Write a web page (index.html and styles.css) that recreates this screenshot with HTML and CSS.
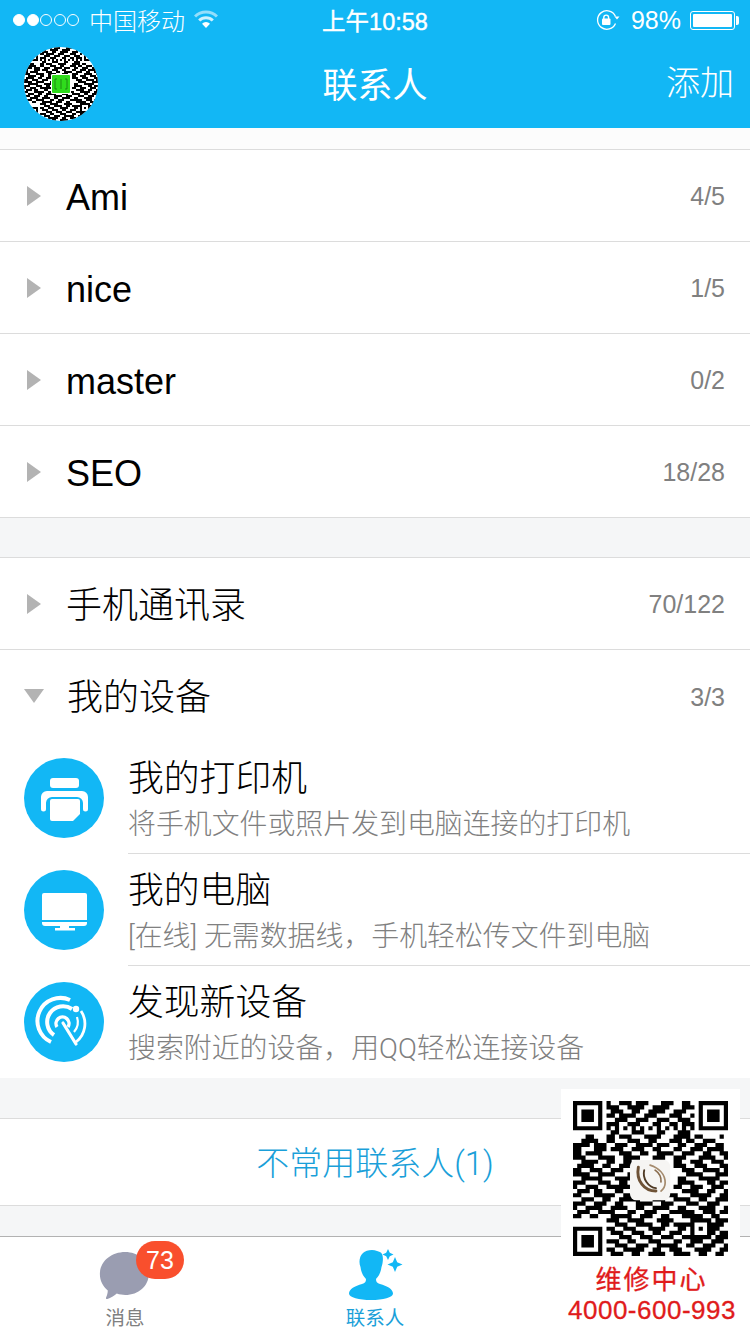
FILE: index.html
```html
<!DOCTYPE html>
<html lang="zh">
<head>
    <meta charset="utf-8">
    <title>联系人</title>
    <link rel="stylesheet" href="styles.css">
</head>
<body>
<div class="phone">
  <header class="top">
    <div class="status">
      <div class="status-left">
        <span class="signal"><i class="on"></i><i class="on"></i><i></i><i></i><i></i></span>
        <span class="carrier">中国移动</span>
        <svg class="wifi" width="24" height="18" viewBox="0 0 24 18" fill="none" stroke="#fff" stroke-width="3">
          <path d="M1 6.5a15.500 15.500 0 0 1 22 0" opacity=".55"/>
          <path d="M5.200 10.500a9.500 9.500 0 0 1 13.600 0" opacity=".8"/>
          <path d="M12 18l-4-4.300a5.600 5.600 0 0 1 8 0z" fill="#fff" stroke="none"/>
        </svg>
      </div>
      <div class="clock">上午10:58</div>
      <div class="status-right">
        <svg class="lock" width="24" height="20" viewBox="0 0 24 20" fill="none" stroke="#fff">
          <path d="M19.500 13.500a9.300 9.300 0 1 1 0-7" stroke-width="1.300"/>
          <path d="M18.500 6.500h5l-2.500 3z" fill="#fff" stroke="none"/>
          <rect x="6" y="8.500" width="8.500" height="6.500" rx="1" fill="#fff" stroke="none"/>
          <path d="M7.800 9V7.500a2.400 2.400 0 0 1 4.800 0V9" stroke-width="1.400"/>
        </svg>
        <span class="percent">98%</span>
        <span class="battery"><b></b></span>
      </div>
    </div>
    <nav class="nav">
      <svg class="avatar" viewBox="0 0 37 37">
        <defs><clipPath id="round"><circle cx="18.500" cy="18.500" r="18.500"/></clipPath></defs>
        <g clip-path="url(#round)">
          <rect width="37" height="37" fill="#fff"/>
          <path class="qr-modules" fill="#000"/>
          <rect x="13.500" y="13.500" width="10" height="10" rx=".6" fill="#fff"/>
          <rect x="14" y="14" width="9" height="9" rx=".5" fill="#2fdb1c"/>
          <path d="M16.500 16h-1v5h1M18.500 16v5M20.500 16h1v5h-1" fill="none" stroke="#176a10" stroke-width=".35"/>
        </g>
      </svg>
      <div class="nav-title">联系人</div>
      <div class="nav-add">添加</div>
    </nav>
  </header>

  <main class="content">
    <ul class="groups first">
      <li class="group"><i class="arrow"></i><span class="name">Ami</span><span class="count">4/5</span></li>
      <li class="group"><i class="arrow"></i><span class="name">nice</span><span class="count">1/5</span></li>
      <li class="group"><i class="arrow"></i><span class="name">master</span><span class="count">0/2</span></li>
      <li class="group"><i class="arrow"></i><span class="name">SEO</span><span class="count">18/28</span></li>
    </ul>

    <ul class="groups second">
      <li class="group"><i class="arrow"></i><span class="name">手机通讯录</span><span class="count">70/122</span></li>
      <li class="group open"><i class="arrow down"></i><span class="name">我的设备</span><span class="count">3/3</span></li>
      <li class="device">
        <svg class="device-icon" viewBox="0 0 80 80">
          <circle cx="40" cy="40" r="40" fill="#12b7f5"/>
          <rect x="26" y="20" width="29" height="10" rx="3" fill="#fff"/>
          <path d="M23 33h35a6 6 0 0 1 6 6v12a2.500 2.500 0 0 1-5 0V45a6 6 0 0 0-6-6H28a6 6 0 0 0-6 6v6a2.500 2.500 0 0 1-5 0V39a6 6 0 0 1 6-6z" fill="#fff"/>
          <path d="M28 41h26a2 2 0 0 1 2 2v13l-7 7H28a2 2 0 0 1-2-2V43a2 2 0 0 1 2-2z" fill="#fff"/>
        </svg>
        <div class="device-text">
          <div class="device-name">我的打印机</div>
          <div class="device-desc">将手机文件或照片发到电脑连接的打印机</div>
        </div>
      </li>
      <li class="device">
        <svg class="device-icon" viewBox="0 0 80 80">
          <circle cx="40" cy="40" r="40" fill="#12b7f5"/>
          <path d="M20 23h41a2 2 0 0 1 2 2v25H18V25a2 2 0 0 1 2-2z" fill="#fff"/>
          <path d="M18 52h45v1a3 3 0 0 1-3 3H21a3 3 0 0 1-3-3z" fill="#fff"/>
          <path d="M36 56h9v2h6v2.500H31V58h5z" fill="#fff"/>
        </svg>
        <div class="device-text">
          <div class="device-name">我的电脑</div>
          <div class="device-desc">[在线] 无需数据线，手机轻松传文件到电脑</div>
        </div>
      </li>
      <li class="device last">
        <svg class="device-icon" viewBox="0 0 80 80">
          <circle cx="40" cy="40" r="40" fill="#12b7f5"/>
          <g fill="none" stroke="#fff">
            <path d="M27 60A23 23 0 0 1 46 18" stroke-width="4"/>
            <path d="M57 29a23 23 0 0 1-5 31" stroke-width="2.800"/>
            <path d="M30 53A15.500 15.500 0 0 1 48 27" stroke-width="4"/>
            <path d="M53 35a15.500 15.500 0 0 1-3 15" stroke-width="2.200"/>
            <path d="M33 45a6.500 6.500 0 1 1 11 0" stroke-width="3.400"/>
          </g>
          <path d="M37 43l-10 22h22z" fill="#12b7f5"/>
          <path d="M39 41l13 21" fill="none" stroke="#fff" stroke-width="3.200" stroke-linecap="round"/>
          <circle cx="52" cy="27" r="3.200" fill="#fff"/>
        </svg>
        <div class="device-text">
          <div class="device-name">发现新设备</div>
          <div class="device-desc">搜索附近的设备，用QQ轻松连接设备</div>
        </div>
      </li>
    </ul>

    <div class="rare">不常用联系人(1)</div>
  </main>

  <footer class="tabs">
    <div class="tab">
      <span class="tab-icon">
        <svg width="60" height="56" viewBox="0 0 60 56">
          <path transform="translate(3.940 0) scale(.94 1)" d="M28 5c14 0 25 9.500 25 22 0 12-11 21-25 21-3 0-6-.4-9-1.400-3 2.400-6.500 4.400-10 5.400-1.400.3-1.800-.6-1.300-1.700 1-2 1.700-4.200 1.700-6.700C4 39 1 33.500 1 27 1 14.500 13 5 28 5z" fill="#9a9db1"/>
        </svg>
        <span class="badge">73</span>
      </span>
      <span class="tab-label">消息</span>
    </div>
    <div class="tab active">
      <span class="tab-icon">
        <svg width="60" height="56" viewBox="0 0 60 56">
          <path d="M18 6c3-3 10-4 14-2 2 .5 4 1 5 3 1.500 3 1 9-.5 13-.6 5-2.500 9-5.500 12 0 3 1 4 4 5 7 2 13 5 13 9.500 0 4-10 6.500-22 6.500S4 50.500 4 46.500C4 42 10 39 17 37c3-1 4-2 4-5-3-3-5-7-5.500-12-2-5-1-11 2.500-14z" fill="#12b7f5"/>
          <path d="M43 2l1.800 3.700L48.500 7.500l-3.700 1.800L43 13l-1.800-3.700-3.700-1.800 3.700-1.800zM50 10l2.200 5.300 5.300 2.200-5.300 2.200L50 25l-2.200-5.300-5.300-2.200 5.300-2.200z" fill="#12b7f5"/>
        </svg>
      </span>
      <span class="tab-label">联系人</span>
    </div>
    <div class="tab"></div>
  </footer>

  <aside class="promo">
    <svg class="promo-qr" viewBox="0 0 37 37">
      <path class="qr-modules" fill="#000"/>
      <rect x="13.600" y="14.100" width="9.600" height="9.600" rx="1.500" fill="#f6f5f3"/>
      <g fill="none" stroke-linecap="round">
        <path d="M15.600 15.800C15 19 17 21.500 19.800 21.500" stroke="#6e5236" stroke-width=".7"/>
        <path d="M17 16.500c-.5 2 1 4.100 2.800 4.300" stroke="#4f3a25" stroke-width=".45"/>
        <path d="M18.400 15.300c2.100.7 3.600 2.200 3.600 4.200 0 .9-.4 1.500-1 2" stroke="#a48a6c" stroke-width=".4"/>
        <path d="M19.600 16.500c1 .7 1.500 1.700 1.400 2.800" stroke="#8a6d4e" stroke-width=".4"/>
      </g>
    </svg>
    <div class="promo-title">维修中心</div>
    <div class="promo-phone">4000-600-993</div>
  </aside>
</div>
<script src="qr.js"></script>
</body>
</html>
```

FILE: styles.css
```css
* {
    box-sizing: border-box;
}

body {
    margin: 0;
    font-family: "Liberation Sans", "Noto Sans CJK SC", sans-serif;
    color: #000;
}

ul {
    list-style: none;
    margin: 0;
    padding: 0;
}

.phone {
    position: relative;
    width: 750px;
    height: 1334px;
    display: flex;
    flex-direction: column;
    overflow: hidden;
    background-color: #f5f6f7;
}

/* blue header */
.top {
    height: 128px;
    background-color: #12b7f5;
    color: #fff;
}

.status {
    height: 40px;
    display: grid;
    grid-template-columns: 1fr auto 1fr;
    align-items: center;
}

.status-left {
    display: flex;
    align-items: center;
    padding-left: 13px;
}

.signal {
    display: flex;
    gap: 1.500px;
}

.signal i {
    width: 12px;
    height: 12px;
    border-radius: 50%;
    border: 1px solid #fff;
}

.signal i.on {
    background-color: #fff;
}

.carrier {
    margin: -2px 0 0 10px;
    font-size: 24px;
    font-weight: 300;
}

.wifi {
    margin: -2px 0 0 9px;
}

.clock {
    margin-top: -1px;
    font-size: 23.500px;
    -webkit-text-stroke: .4px #fff;
}

.status-right {
    display: flex;
    align-items: center;
    justify-content: flex-end;
    padding-right: 12px;
}

.percent {
    margin-left: 11px;
    font-size: 25px;
}

.battery {
    position: relative;
    width: 45px;
    height: 19px;
    margin-left: 9px;
    margin-right: 3px;
    padding: 2px;
    border: 1px solid #fff;
    border-radius: 3px;
}

.battery b {
    display: block;
    height: 100%;
    background-color: #fff;
    border-radius: 1px;
}

.battery::after {
    content: "";
    position: absolute;
    right: -5px;
    top: 4px;
    width: 3px;
    height: 9px;
    background-color: #fff;
    border-radius: 0 2px 2px 0;
}

.nav {
    position: relative;
    height: 88px;
    display: flex;
    align-items: center;
    justify-content: space-between;
    padding: 0 16px 0 24px;
}

.avatar {
    width: 74px;
    height: 74px;
}

.nav-title {
    position: absolute;
    left: 0;
    right: 0;
    top: 25px;
    text-align: center;
    font-size: 35px;
    line-height: 42px;
}

.nav-add {
    font-size: 34px;
    line-height: 42px;
    font-weight: 300;
    margin-top: -2px;
}

/* contact groups */
.content {
    flex: 1;
}

.content::before {
    content: "";
    display: block;
    position: absolute;
    left: 0;
    right: 0;
    top: 128px;
    height: 21px;
    background-color: #fcfcfc;
}

.groups {
    background-color: #fff;
    border-top: 1px solid #dcdcdc;
}

.groups.first {
    margin-top: 21px;
}

.groups.second {
    margin-top: 39px;
}

.group {
    height: 92px;
    display: flex;
    align-items: center;
    padding: 0 25px 0 27px;
    border-bottom: 1px solid #dcdcdc;
}

.group.open {
    border-bottom: 0;
}

.arrow {
    width: 0;
    height: 0;
    border-left: 14px solid #b3b3b3;
    border-top: 10.500px solid transparent;
    border-bottom: 10.500px solid transparent;
    margin-right: 25px;
}

.arrow.down {
    border-left: 10px solid transparent;
    border-right: 10px solid transparent;
    border-top: 14px solid #b3b3b3;
    border-bottom: 0;
    margin: 0 23px 0 -3px;
}

.name {
    flex: 1;
    font-size: 36px;
    font-weight: 300;
    line-height: 44px;
    margin-top: 4px;
}

.count {
    font-size: 25px;
    margin-top: 2px;
    color: #808080;
}

.device {
    height: 112px;
    display: flex;
    padding-left: 24px;
}

.device-icon {
    width: 80px;
    height: 80px;
    margin-top: 16px;
    flex: none;
}

.device-text {
    flex: 1;
    margin-left: 24px;
    border-bottom: 1px solid #dcdcdc;
}

.device.last .device-text {
    border-bottom: 0;
}

.device-name {
    margin-top: 15px;
    font-size: 35.800px;
    font-weight: 300;
    line-height: 44px;
}

.device-desc {
    font-family: Roboto, "Noto Sans CJK SC", sans-serif;
    font-size: 27.900px;
    font-weight: 300;
    line-height: 40px;
    margin-top: 4px;
    color: #808080;
    white-space: nowrap;
}

.rare {
    height: 88px;
    margin-top: 40px;
    background-color: #fff;
    border-top: 1px solid #dcdcdc;
    border-bottom: 1px solid #dcdcdc;
    text-align: center;
    font-family: Roboto, "Noto Sans CJK SC", sans-serif;
    font-size: 33px;
    font-weight: 300;
    line-height: 90px;
    color: #1a9fd9;
}

/* bottom tabs */
.tabs {
    height: 98px;
    display: grid;
    grid-template-columns: repeat(3, 250px);
    background-color: #fff;
    border-top: 1px solid #b2b2b2;
}

.tab {
    display: flex;
    flex-direction: column;
    align-items: center;
    color: #808080;
}

.tab.active {
    color: #1a9fd9;
}

.tab-icon {
    position: relative;
    height: 56px;
    margin-top: 10px;
}

.tab-label {
    font-size: 19.500px;
    line-height: 30px;
}

.badge {
    position: absolute;
    left: 41px;
    top: -6px;
    width: 48px;
    height: 38px;
    border-radius: 19px;
    background-color: #f94f2d;
    color: #fff;
    font-size: 25px;
    line-height: 38px;
    text-align: center;
}

/* overlay card with the service code */
.promo {
    position: absolute;
    left: 561px;
    top: 1089px;
    width: 179px;
    height: 245px;
    background-color: #fff;
    text-align: center;
    color: #e01b1b;
}

.promo-qr {
    display: block;
    width: 155px;
    height: 155px;
    margin: 12px 0 0 12px;
}

.promo-title {
    margin: 6px 0 0 2px;
    font-size: 26px;
    line-height: 36px;
    letter-spacing: 2px;
    -webkit-text-stroke: .3px #e01b1b;
}

.promo-phone {
    margin: -3px 0 0 3px;
    font-size: 26px;
    line-height: 30px;
    letter-spacing: .5px;
    white-space: nowrap;
    -webkit-text-stroke: .3px #e01b1b;
}
```

FILE: qr.js
```js
// module rows for the square codes, finder and alignment blocks are added below
var rows = [
  "0000000010011101110001110011000000000",
  "0000000011100111100111100011100000000",
  "0000000001110011001111001110000000000",
  "0000000011011110011100011100100000000",
  "0000000000111001110011100111000000000",
  "0000000011100111000110011011100000000",
  "0000000010101010101010101010100000000",
  "0000000001100011100011000111000000000",
  "0001100011011100011110001111011000010",
  "0011110011000111001100011101100111000",
  "1111011100111001111011100110011100110",
  "1100011101110011100110001100111011110",
  "1101111000011100110011110011100110011",
  "1110001111001111000111001110001111001",
  "0011110011001100000000001100111001110",
  "0111100110011100000000001110011100011",
  "1100111001110000000000000011100111101",
  "1111001111000110000000000001111000111",
  "0011111000111100000000000110001111100",
  "1110001110011000000000000111100011011",
  "1001110011111100000000001100111001110",
  "0111011000110011000000000011110011001",
  "1100011111001110011100111000111110011",
  "0011100110011111000111001111001100111",
  "1110011100110001111001110001110011100",
  "1001111001111001100111100110001111001",
  "0111001111000110011100011111100111011",
  "1100110001111100111001100011111001100",
  "0000000011100111100011110000001100111",
  "0000000000111001111001101111110011110",
  "0000000011001110001111000110111001100",
  "0000000001110011100110011100110011011",
  "0000000000011100111001110011111100111",
  "0000000011100110001110001100111001110",
  "0000000000111001110011111001100111001",
  "0000000011001111100110011100011110011",
  "0000000001110011001111001111001100110"
];

function inBlock(x, y, left, top, size) {
  return x >= left && x < left + size && y >= top && y < top + size;
}

// concentric square: dark edge, light ring, dark core
function squareCell(x, y, left, top, size) {
  var d = Math.min(x - left, y - top, left + size - 1 - x, top + size - 1 - y);
  return d === 0 || d >= 2;
}

function cell(x, y) {
  if (inBlock(x, y, 0, 0, 7)) return squareCell(x, y, 0, 0, 7);
  if (inBlock(x, y, 30, 0, 7)) return squareCell(x, y, 30, 0, 7);
  if (inBlock(x, y, 0, 30, 7)) return squareCell(x, y, 0, 30, 7);
  if (inBlock(x, y, 28, 28, 5)) return squareCell(x, y, 28, 28, 5);
  return rows[y].charAt(x) === "1";
}

var d = "";
for (var y = 0; y < 37; y++) {
  for (var x = 0; x < 37; x++) {
    if (cell(x, y)) d += "M" + x + " " + y + "h1v1h-1z";
  }
}

document.querySelectorAll(".qr-modules").forEach(function (el) {
  el.setAttribute("d", d);
});
```
